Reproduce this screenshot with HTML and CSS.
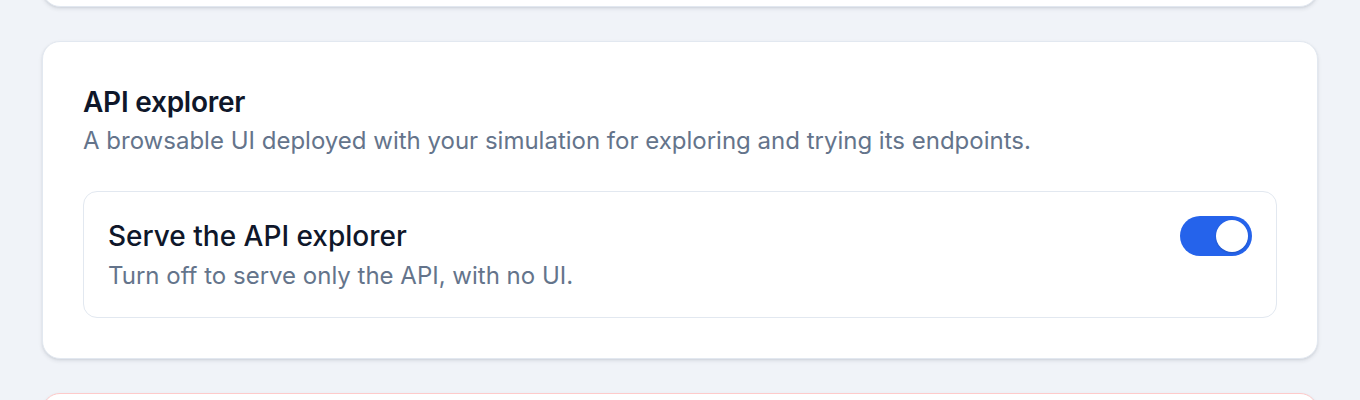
FILE: index.html
```html
<!DOCTYPE html>
<html lang="en">
<head>
<meta charset="utf-8">
<title>API explorer settings</title>
<link rel="stylesheet" href="styles.css">
</head>
<body>
<main class="page">
  <section class="card card-prev"></section>
  <section class="card">
    <h2 class="card-title">API explorer</h2>
    <p class="card-desc">A browsable UI deployed with your simulation for exploring and trying its endpoints.</p>
    <div class="setting">
      <div class="setting-text">
        <div class="setting-title">Serve the API explorer</div>
        <div class="setting-desc">Turn off to serve only the API, with no UI.</div>
      </div>
      <button class="toggle on" type="button" role="switch" aria-checked="true" aria-label="Serve the API explorer"><span class="knob"></span></button>
    </div>
  </section>
  <section class="card card-danger"></section>
</main>
</body>
</html>
```
FILE: styles.css
```css
html, body {
  margin: 0;
  padding: 0;
  background: #f0f3f8;
  font-family: Inter, "Noto Sans", "Liberation Sans", sans-serif;
  overflow: hidden;
}

.page {
  display: flex;
  flex-direction: column;
  gap: 34px;
  padding: 0 42px;
  margin-top: -101px;
}

.card {
  background: #ffffff;
  border: 1px solid #e2e8f0;
  border-radius: 18px;
  box-shadow: 0 2px 4px rgba(15, 23, 42, 0.09), 0 1px 2px rgba(15, 23, 42, 0.06);
  padding: 40px;
}

.card-prev {
  height: 106px;
  padding: 0;
}

.card-danger {
  border-color: #fecaca;
  height: 200px;
  padding: 0;
}

.card-title {
  margin: 2px 0 0;
  font-size: 28px;
  line-height: 36px;
  font-weight: 600;
  color: #0f172a;
  letter-spacing: -0.25px;
}

.card-desc {
  margin: 5px 0 0;
  font-size: 24px;
  line-height: 32px;
  color: #64748b;
}

.setting {
  margin-top: 34px;
  border: 1px solid #e2e8f0;
  border-radius: 14px;
  padding: 24px 24px 25px;
  display: flex;
  justify-content: space-between;
  align-items: flex-start;
}

.setting-title {
  margin-top: 2px;
  font-size: 28px;
  line-height: 36px;
  font-weight: 500;
  color: #0f172a;
}

.setting-desc {
  margin-top: 6px;
  font-size: 24px;
  line-height: 32px;
  color: #64748b;
}

.toggle {
  width: 72px;
  height: 40px;
  border: none;
  border-radius: 20px;
  background: #2563eb;
  padding: 4px;
  display: flex;
  justify-content: flex-end;
  cursor: pointer;
}

.knob {
  width: 32px;
  height: 32px;
  border-radius: 50%;
  background: #ffffff;
  box-shadow: 0 1px 2px rgba(15, 23, 42, 0.2);
}
```
